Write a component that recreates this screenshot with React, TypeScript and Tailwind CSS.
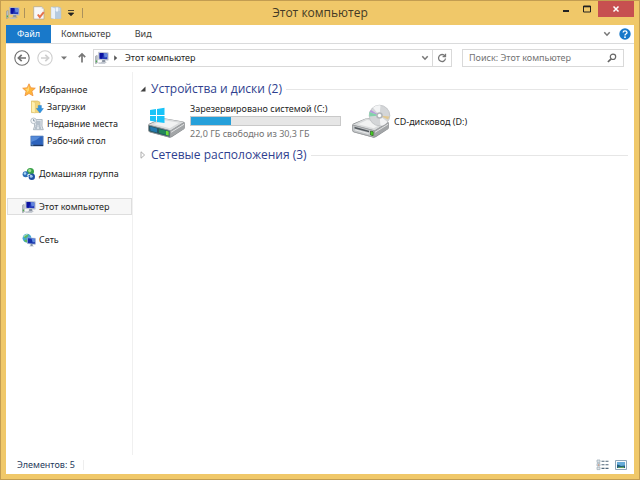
import React from 'react';

type IconProps = { className?: string };

function ComputerIcon({ className = 'h-3.5 w-3.5' }: IconProps) {
  return (
    <svg className={`shrink-0 ${className}`} viewBox="0 0 14 14" aria-hidden="true">
      <path d="M0.5 5.2 2.2 4.4V12L0.5 12.6Z" fill="#c3c8cf" stroke="#8b929b" strokeWidth="0.6" />
      <path d="M.8 9.5h1.2v1.8H.8z" fill="#4db04a" />
      <path d="M3.6 1.2 13.2 1.8V9.2L3.6 8.6Z" fill="#c9d0dc" stroke="#a3abb8" strokeWidth="0.5" />
      <path d="M4.6 2.1 12.4 2.5V8.2L4.6 7.7Z" fill="#2338b8" />
      <path d="M4.6 2.1H8.6L7 7.8 4.6 7.7Z" fill="#0b12a0" />
      <path d="M8.8 2.3 12.4 2.5V6L9.5 6.4Z" fill="#6386dd" />
      <path d="M7.2 9h3v1.6l1.6 1H5.6l1.6-1Z" fill="#8b94a2" />
      <path d="M3.2 11.5h6l1.5 1.2H3.6Z" fill="#b7bec8" />
    </svg>
  );
}

function PropertiesIcon() {
  return (
    <svg className="h-3.5 w-3" viewBox="0 0 12 14" aria-hidden="true">
      <path d="M.7.7h8l2.3 2.4v10H.7Z" fill="#f8f8f8" stroke="#b4a991" strokeWidth=".8" />
      <path d="M8.7.7v2.4H11Z" fill="#d7d7d7" />
      <path d="m4.8 8.5 2 2.6 4-5" fill="none" stroke="#e5734c" strokeWidth="2" />
    </svg>
  );
}

function NewFolderIcon() {
  return (
    <svg className="h-3.5 w-3" viewBox="0 0 12 14" aria-hidden="true">
      <path d="M1.2 1h7.2l2.4 1v10.5H1.2Z" fill="#c9d7e6" stroke="#aebfce" strokeWidth=".7" />
      <path d="M1.2 1 5 2.4V13L1.2 12Z" fill="#eaf1f8" />
      <path d="M5 5h5.8v7.5H5Z" fill="#b6cbe0" />
      <path d="M6 1.5h2v4H6Z" fill="#edf4fa" />
    </svg>
  );
}

function StarIcon() {
  return (
    <svg className="h-3.5 w-3.5 shrink-0" viewBox="0 0 14 14" aria-hidden="true">
      <path d="m7 .8 1.8 4 4.5.4-3.4 3 1.1 4.6L7 10.5l-4 2.3 1.1-4.6-3.4-3 4.5-.4Z" fill="#ffb63c" stroke="#f0913a" strokeWidth=".8" />
      <path d="M7 2.6v5L4.4 10l.6-2.4L3 5.9l2.8-.3Z" fill="#ffd873" />
    </svg>
  );
}

function DownloadsIcon() {
  return (
    <svg className="h-3.5 w-3.5 shrink-0" viewBox="0 0 14 14" aria-hidden="true">
      <path d="M1.5 1h6l2.3 1v10.6H1.5Z" fill="#f1d67d" stroke="#d4b254" strokeWidth=".6" />
      <path d="m1.5 1 3.8 1.6V13l-3.8-1Z" fill="#fff0af" stroke="#dfbf65" strokeWidth=".5" />
      <path d="M8.2 5.5h3.2v3h2L10 13 6.3 8.5h1.9Z" fill="#2f94e3" stroke="#2477bd" strokeWidth=".4" />
    </svg>
  );
}

function RecentIcon() {
  return (
    <svg className="h-3.5 w-3.5 shrink-0" viewBox="0 0 14 14" aria-hidden="true">
      <path d="M4 2.5h8.2L12 9l1.3 3.7H3.4L4.6 9Z" fill="#dce3e9" stroke="#97a3ae" strokeWidth=".7" />
      <path d="M6 5h4.5M6 7h4.5M5.5 9h2m1 0h2M5 11h2m2 0h2" stroke="#8796a6" strokeWidth=".9" />
      <circle cx="3.6" cy="3.8" r="2.8" fill="#f5f7f9" stroke="#a8b4be" strokeWidth=".8" />
      <path d="M3.6 2v2H5.2" fill="none" stroke="#647a8d" strokeWidth=".7" />
    </svg>
  );
}

function DesktopIcon() {
  return (
    <svg className="h-3.5 w-3.5 shrink-0" viewBox="0 0 14 14" aria-hidden="true">
      <path d="M.8 2h12.4v10H.8Z" fill="#2c63bd" stroke="#6f8fbe" strokeWidth=".7" />
      <path d="M1.2 2.4h9.5Q6 7 1.2 8Z" fill="#568bd8" />
      <path d="M1 10.8h12V12H1Z" fill="#20375e" />
      <path d="M1.5 11h1.8" stroke="#89d1ff" strokeWidth=".7" />
    </svg>
  );
}

function HomegroupIcon() {
  return (
    <svg className="h-3.5 w-3.5 shrink-0" viewBox="0 0 14 14" aria-hidden="true">
      <circle cx="8.4" cy="4.5" r="3.6" fill="#3ba24a" />
      <circle cx="7.7" cy="3.6" r="1.6" fill="#a4dd98" />
      <circle cx="3.6" cy="7.3" r="3" fill="#2d6eb7" />
      <circle cx="3" cy="6.5" r="1.3" fill="#a8d6f5" />
      <circle cx="9.8" cy="9.8" r="3.2" fill="#1f50a4" />
      <circle cx="9.2" cy="9.3" r="1.5" fill="#a2c8f0" />
      <path d="M5 8.5 7.3 7l1.4 1.4" fill="none" stroke="#e3f3fa" strokeWidth="1" />
    </svg>
  );
}

function NetworkIcon() {
  return (
    <svg className="h-3.5 w-3.5 shrink-0" viewBox="0 0 14 14" aria-hidden="true">
      <circle cx="5" cy="5.2" r="4.4" fill="#45a6d7" />
      <path d="M1.5 3.2Q4 .2 6.8 1.6L5.4 4 3 5.5ZM2 7l3-.5.5 3Q2.8 9.5 2 7Z" fill="#5cb85e" />
      <path d="M1.6 4Q3 1.3 5.5 1.4" fill="none" stroke="#c9f0f5" strokeWidth=".8" />
      <path d="m5.5 4.8 7.8.6v5.8l-7.8-.7Z" fill="#1430aa" stroke="#a4b5d2" strokeWidth=".7" />
      <path d="m9.5 5.5 3.4.2v3.4l-2.2.3Z" fill="#5d8be0" />
      <path d="M8.6 11h2v1.4l1.4.8H7l1.6-.8Z" fill="#8492a5" />
    </svg>
  );
}

function DriveBody({ green }: { green: boolean }) {
  return (
    <g>
      <path d="M1.5 21Q1 20 3 19.3L14 14.8Q15.5 14 17 14.2L36 17.5Q38 18 37.8 19.5V23.5Q38 24.5 36.5 25.5L25 33Q23.500 34 22 33.600L3 28.300Q1.500 28 1.500 26.500Z" fill="#85888a" />
      <path d="M1.500 20.800 14 14.900Q15.500 14.200 17 14.400L37 18 23.500 26.500Z" fill="#d9dbdc" />
      <path d="M7 20.300 16 16 32 18.700 22.800 24.200Z" fill="#f1f2f2" />
      <path d="M1.500 21 23 26.600V33.300L3 28Q1.600 27.600 1.600 26Z" fill={green ? '#245562' : '#c4c7c9'} stroke="#999c9e" strokeWidth=".8" />
      <path d="M23.300 26.700 37.500 18.200V23.500Q37.500 24.500 36.500 25.200L23.300 33.300Z" fill="#a3a6a8" />
      <path d="M24 28.300 37 20.300" stroke="#e2e3e4" strokeWidth="1" />
      {green ? (
        <g>
          <path d="m3 22.500 7 1.900v4l-6.500-1.700Z" fill="#2378ad" />
          <path d="m12 24.900 8 2.200v4l-8-2.200Z" fill="#22875a" />
          <path d="m19 26.800 2.700.7v4.200l-2.700-.7Z" fill="#6edc37" />
        </g>
      ) : (
        <g>
          <path d="m3.500 22.800 14.500 3.900v1.600L3.500 24.400Z" fill="#555b60" />
          <path d="m4 25.800 13.500 3.700" stroke="#f3f4f4" strokeWidth=".8" />
          <path d="m19.500 27 2.700.7v4l-2.700-.7Z" fill="#44d21d" stroke="#2c5f24" strokeWidth=".7" />
        </g>
      )}
    </g>
  );
}

function SystemDriveIcon() {
  return (
    <svg className="h-9 w-10 shrink-0" viewBox="0 0 40 36" aria-hidden="true">
      <DriveBody green />
      <path d="m3 6 6-.9v6H3Zm7-1 7.500-1.200v7.300H10ZM3 12h6v5.700l-6-.9Zm7 0h7.500v7L10 17.900Z" fill="#19c3f8" />
    </svg>
  );
}

function CdDriveIcon() {
  return (
    <svg className="h-9 w-10 shrink-0" viewBox="0 0 40 36" aria-hidden="true">
      <DriveBody green={false} />
      <circle cx="28.5" cy="11.5" r="10.3" fill="#d4d6d8" stroke="#b6b9bb" strokeWidth=".7" />
      <path d="M28.5 11.5 22 3.7Q25 1 29.5 1.4ZM28.5 11.5l8 6.5q-3 3.7-7 3.8Z" fill="#f3f4f5" />
      <path d="m28.5 11.5-10-3.5 1.5-2Z" fill="#b998dc" />
      <path d="m28.5 11.5-10.2 1V8Z" fill="#83d2ab" />
      <path d="m28.5 11.5 8.500 4 1.500-3Z" fill="#e1c892" />
      <circle cx="28.5" cy="11.5" r="3.3" fill="#b3b7ba" />
      <circle cx="28.5" cy="11.5" r="1.7" fill="#fff" />
    </svg>
  );
}

function ChevronDown() {
  return (
    <svg className="h-2 w-2" viewBox="0 0 8 8" aria-hidden="true">
      <path d="m1.3 2.2 2.7 3 2.7-3" fill="none" stroke="#777" strokeWidth="1.5" />
    </svg>
  );
}

function NavArrow({ forward = false }: { forward?: boolean }) {
  const color = forward ? '#cfcfcf' : '#707070';
  return (
    <svg className="h-4 w-4" viewBox="0 0 16 16" aria-hidden="true">
      <circle cx="8" cy="8" r="7.2" fill="#fff" stroke={color} strokeWidth="1.1" />
      <path
        d={forward ? 'M4 8h7.4M8.3 4.8 11.6 8l-3.3 3.2' : 'M12 8H4.6M7.7 4.8 4.4 8l3.3 3.2'}
        fill="none"
        stroke={color}
        strokeWidth="1.7"
      />
    </svg>
  );
}

type SideItemProps = { icon: React.ReactNode; label: string; nested?: boolean; selected?: boolean };

function SideItem({ icon, label, nested = false, selected = false }: SideItemProps) {
  return (
    <button
      type="button"
      aria-current={selected ? 'page' : undefined}
      className={`flex h-[17px] w-full items-center gap-[3px] border whitespace-nowrap ${nested ? 'pl-[22px]' : 'pl-3.5'} ${
        selected ? 'border-[#dedede] bg-[#f7f7f7]' : 'border-transparent'
      }`}
    >
      {icon}
      <span>{label}</span>
    </button>
  );
}

function GroupHeading({ title, open = false }: { title: string; open?: boolean }) {
  return (
    <h2 className="flex h-4 items-center font-['Open_Sans','Noto_Sans',sans-serif] text-[12px] text-[#2f3f8f]">
      <button type="button" aria-expanded={open} className="flex items-center gap-1 whitespace-nowrap">
        <svg className="h-2 w-2" viewBox="0 0 8 8" aria-hidden="true">
          {open ? (
            <path d="M6.5 1.5v5h-5Z" fill="#404040" />
          ) : (
            <path d="M2 .8 5.6 4 2 7.2Z" fill="#fff" stroke="#a6a6a6" strokeWidth=".9" />
          )}
        </svg>
        {title}
      </button>
      <span className="ml-1 h-px flex-1 bg-[#e6e6e6]" />
    </h2>
  );
}

export default function App() {
  return (
    <div className="flex h-screen flex-col border border-[#c39d51] bg-[#f0c869] px-[5px] pb-[5px] font-['Noto_Sans','Open_Sans',sans-serif] text-[9px] leading-3 text-[#1e1e1e]">
      <header className="grid h-6 shrink-0 grid-cols-[1fr_auto_1fr]">
        <div className="flex items-center">
          <ComputerIcon />
          <span className="ml-1 h-2.5 w-px bg-[#ab915c]" />
          <button type="button" aria-label="Свойства" className="ml-2">
            <PropertiesIcon />
          </button>
          <button type="button" aria-label="Новая папка" className="ml-[5px]">
            <NewFolderIcon />
          </button>
          <button type="button" aria-label="Настройка панели быстрого доступа" className="ml-[5px]">
            <svg className="h-2 w-2" viewBox="0 0 8 8" aria-hidden="true">
              <path d="M1 1.5h6M1.3 4h5.4L4 6.8Z" fill="#222" stroke="#222" strokeWidth=".8" />
            </svg>
          </button>
          <span className="ml-[7px] h-2.5 w-px bg-[#ab915c]" />
        </div>
        <h1 className="self-center font-['Open_Sans','Noto_Sans',sans-serif] text-[12px] leading-4 text-[#443a25]">Этот компьютер</h1>
        <div className="flex items-start justify-end">
          <button type="button" aria-label="Свернуть" className="flex h-4 w-5 items-center justify-center">
            <svg className="h-2 w-2" viewBox="0 0 8 8" aria-hidden="true">
              <path d="M1 5h6v2H1Z" fill="#222" />
            </svg>
          </button>
          <button type="button" aria-label="Развернуть" className="flex h-4 w-[22px] items-center justify-center">
            <svg className="h-2 w-2" viewBox="0 0 8 8" aria-hidden="true">
              <path d="M.5 1h7v6h-7Z" fill="none" stroke="#222" />
              <path d="M0 1h8v1.3H0Z" fill="#222" />
            </svg>
          </button>
          <button type="button" aria-label="Закрыть" className="flex h-4 w-9 items-center justify-center bg-[#c75050]">
            <svg className="h-2 w-2" viewBox="0 0 8 8" aria-hidden="true">
              <path d="m1.5 1.5 5 5m0-5-5 5" stroke="#fff" strokeWidth="1.5" />
            </svg>
          </button>
        </div>
      </header>

      <div className="flex min-h-0 flex-1 flex-col bg-white">
        <nav className="flex h-[19px] shrink-0 items-stretch border-b border-[#dadbdc] text-[#3c3c3c]">
          <button type="button" className="w-[45px] bg-[#1979ca] text-white">Файл</button>
          <button type="button" className="ml-2.5">Компьютер</button>
          <button type="button" className="ml-6">Вид</button>
          <button type="button" aria-label="Развернуть ленту" className="mr-2 ml-auto">
            <ChevronDown />
          </button>
          <button type="button" aria-label="Справка" className="mr-[3px]">
            <svg className="h-3 w-3" viewBox="0 0 12 12" aria-hidden="true">
              <circle cx="6" cy="6" r="5.7" fill="#1979ca" />
              <path d="M4.1 4.5Q4.2 2.8 6 2.8T8 4.4Q8 5.4 6.9 6 6 6.5 6 7.5" fill="none" stroke="#fff" strokeWidth="1.3" />
              <circle cx="6" cy="9.2" r=".9" fill="#fff" />
            </svg>
          </button>
        </nav>

        <div className="flex h-7 shrink-0 items-center pr-2.5 pl-2">
          <button type="button" aria-label="Назад"><NavArrow /></button>
          <button type="button" aria-label="Вперед" className="ml-[7px]"><NavArrow forward /></button>
          <button type="button" aria-label="Последние расположения" className="ml-[7px]">
            <svg className="h-2 w-2" viewBox="0 0 8 8" aria-hidden="true">
              <path d="M1 2.5h6L4 5.8Z" fill="#777" />
            </svg>
          </button>
          <button type="button" aria-label="Вверх" className="ml-2">
            <svg className="h-3 w-3" viewBox="0 0 12 12" aria-hidden="true">
              <path d="M6 10.5V2M2.8 5.2 6 2l3.2 3.2" fill="none" stroke="#777" strokeWidth="1.7" />
            </svg>
          </button>
          <div className="ml-[5px] flex h-[18px] min-w-0 flex-1 items-center border border-[#d9d9d9]">
            <ComputerIcon className="ml-px h-3.5 w-3.5" />
            <svg className="mx-[3px] h-2 w-2" viewBox="0 0 8 8" aria-hidden="true">
              <path d="M2.2 1.2 5.2 4l-3 2.8Z" fill="#555" />
            </svg>
            <button type="button" className="ml-0.5">Этот компьютер</button>
            <button type="button" aria-label="Предыдущие расположения" className="mr-[3px] ml-auto">
              <ChevronDown />
            </button>
            <button type="button" aria-label="Обновить" className="flex h-4 w-[19px] items-center justify-center border-l border-[#d9d9d9]">
              <svg className="h-2.5 w-2.5" viewBox="0 0 10 10" aria-hidden="true">
                <path d="M7.9 3A3.5 3.5 0 1 0 8.5 5.5M8.5.7v2.9H5.6" fill="none" stroke="#777" strokeWidth="1.3" />
              </svg>
            </button>
          </div>
          <label className="ml-2.5 flex h-[18px] w-[162px] items-center border border-[#d9d9d9] pr-1.5 pl-1.5">
            <input
              type="text"
              aria-label="Поиск"
              placeholder="Поиск: Этот компьютер"
              className="min-w-0 flex-1 outline-none placeholder:text-[#737373] placeholder:opacity-100"
            />
            <svg className="h-2.5 w-2.5" viewBox="0 0 10 10" aria-hidden="true">
              <circle cx="6" cy="3.8" r="2.7" fill="none" stroke="#666" strokeWidth="1.2" />
              <path d="M4.1 5.8.9 9" stroke="#666" strokeWidth="1.7" />
            </svg>
          </label>
        </div>

        <div className="flex min-h-0 flex-1">
          <aside className="flex w-[127px] shrink-0 flex-col gap-4 border-r border-[#f0f0f0] pt-[9px] pl-px">
            <div>
              <SideItem icon={<StarIcon />} label="Избранное" />
              <SideItem icon={<DownloadsIcon />} label="Загрузки" nested />
              <SideItem icon={<RecentIcon />} label="Недавние места" nested />
              <SideItem icon={<DesktopIcon />} label="Рабочий стол" nested />
            </div>
            <SideItem icon={<HomegroupIcon />} label="Домашняя группа" />
            <SideItem icon={<ComputerIcon />} label="Этот компьютер" selected />
            <SideItem icon={<NetworkIcon />} label="Сеть" />
          </aside>

          <main className="min-w-0 flex-1 pt-[9px] pr-1.5 pl-1.5">
            <GroupHeading title="Устройства и диски (2)" open />
            <div className="flex h-[50px] items-center gap-2.5 pb-px pl-2">
              <button type="button" className="flex items-center gap-[3px] text-left">
                <SystemDriveIcon />
                <span className="block w-[151px]">
                  <span className="block whitespace-nowrap">Зарезервировано системой (C:)</span>
                  <span className="mt-px mb-0.5 block h-2.5 border border-[#c9c9c9] bg-[#e6e6e6]">
                    <span className="block h-full w-[27%] bg-[#26a0da]" />
                  </span>
                  <span className="block whitespace-nowrap text-[#737373]">22,0 ГБ свободно из 30,3 ГБ</span>
                </span>
              </button>
              <button type="button" className="flex items-center gap-[3px] whitespace-nowrap">
                <CdDriveIcon />
                <span>CD-дисковод (D:)</span>
              </button>
            </div>
            <GroupHeading title="Сетевые расположения (3)" />
          </main>
        </div>

        <footer className="flex h-[19px] shrink-0 items-center pr-1.5 pl-[11px] text-[#1e395b]">
          <span>Элементов: 5</span>
          <span className="ml-2 h-2.5 w-px bg-[#eeeeee]" />
          <button type="button" aria-label="Таблица" className="mr-1 ml-auto">
            <svg className="h-3 w-3.5" viewBox="0 0 14 12" aria-hidden="true">
              <path d="M1 1h3v2.4H1Zm0 3.6h3V7H1Zm0 3.6h3v2.4H1Z" fill="#e1e7eb" stroke="#9cabb5" strokeWidth=".7" />
              <path d="M5.5 2.2h3m1 0h3M5.5 5.8h3m1 0h3M5.5 9.4h3m1 0h3" stroke="#52677a" strokeWidth="1.1" />
              <path d="M2 5.4h1.2v1H2Z" fill="#cf7950" />
            </svg>
          </button>
          <button type="button" aria-label="Крупные значки">
            <svg className="h-3 w-3.5" viewBox="0 0 14 12" aria-hidden="true">
              <path d="M1.5 1.5h11v9h-11Z" fill="#f8fafb" stroke="#8fa6b8" />
              <path d="M3 3h8v6H3Z" fill="#68acd8" />
              <path d="M3 5.5q2 0 4 1.500l4-.6V9H3Z" fill="#1f5d7d" />
              <path d="m4 8.3 6-.6V9H4Z" fill="#69a85b" />
            </svg>
          </button>
        </footer>
      </div>
    </div>
  );
}
